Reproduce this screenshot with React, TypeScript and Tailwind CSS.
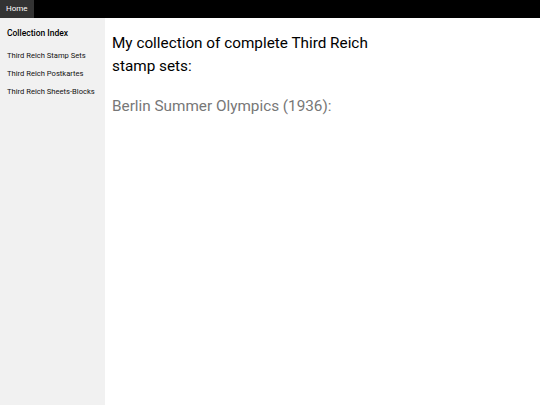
import React from 'react';

const links = ['Third Reich Stamp Sets', 'Third Reich Postkartes', 'Third Reich Sheets-Blocks'];

export default function App() {
  return (
    <div className="w-[540px] h-[405px] flex flex-col bg-white font-['Roboto',sans-serif] overflow-hidden">
      <div className="h-[18px] bg-black flex">
        <div className="bg-[#333333] text-white text-[8px] leading-[18px] px-[6px]">Home</div>
      </div>
      <div className="flex flex-1">
        <div className="w-[105px] bg-[#f1f1f1] pt-[9px] pl-[7px]">
          <div className="text-[8.5px] font-medium text-black leading-[12px] mb-[8px]">Collection Index</div>
          {links.map((l) => (
            <div key={l} className="text-[7.6px] text-[#111111] leading-[18px]">{l}</div>
          ))}
        </div>
        <div className="flex-1 pl-[7px] pt-[14px]">
          <div className="w-[280px] text-[15.3px] leading-[23px] text-black">
            My collection of complete Third Reich stamp sets:
          </div>
          <div className="mt-[17px] text-[15.3px] leading-[23px] text-[#777777]">Berlin Summer Olympics (1936):</div>
        </div>
      </div>
    </div>
  );
}
